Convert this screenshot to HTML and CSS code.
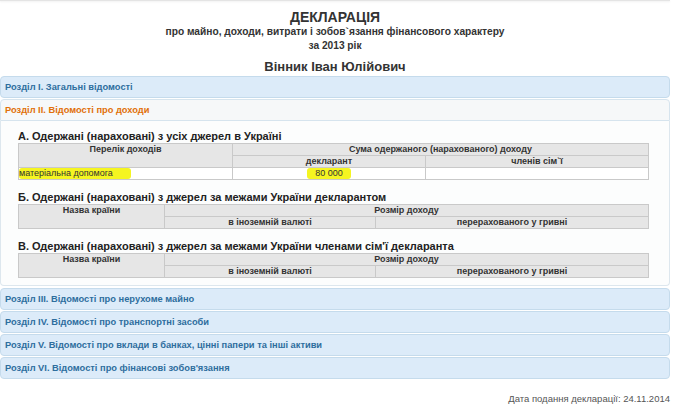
FILE: index.html
```html
<!DOCTYPE html>
<html>
<head>
<meta charset="utf-8">
<link rel="stylesheet" href="styles.css">
</head>
<body>
<div class="page">
  <div class="topbar"></div>
  <div class="heading">
    <div class="title">ДЕКЛАРАЦІЯ</div>
    <div class="sub">про майно, доходи, витрати і зобов`язання фінансового характеру</div>
    <div class="sub">за 2013 рік</div>
    <div class="name">Вінник Іван Юлійович</div>
  </div>
  <div class="accordion">
    <div class="hdr">Розділ І. Загальні відомості</div>
    <div class="hdr active">Розділ ІІ. Відомості про доходи</div>
    <div class="content">
      <div class="sec">А. Одержані (нараховані) з усіх джерел в Україні</div>
      <table class="tbl tbl-a">
        <tr class="th"><td rowspan="2" class="c1">Перелік доходів</td><td colspan="2">Сума одержаного (нарахованого) доходу</td></tr>
        <tr class="th"><td class="c2">декларант</td><td>членів сім`ї</td></tr>
        <tr class="td"><td class="left"><span class="hl hl-a">матеріальна допомога</span></td><td><span class="hl hl-b">80 000</span></td><td></td></tr>
      </table>
      <div class="sec">Б. Одержані (нараховані) з джерел за межами України декларантом</div>
      <table class="tbl tbl-b">
        <tr class="th"><td rowspan="2" class="v-top c1">Назва країни</td><td colspan="2">Розмір доходу</td></tr>
        <tr class="th"><td class="c2">в іноземній валюті</td><td>перерахованого у гривні</td></tr>
      </table>
      <div class="sec">В. Одержані (нараховані) з джерел за межами України членами сім'ї декларанта</div>
      <table class="tbl tbl-b">
        <tr class="th"><td rowspan="2" class="v-top c1">Назва країни</td><td colspan="2">Розмір доходу</td></tr>
        <tr class="th"><td class="c2">в іноземній валюті</td><td>перерахованого у гривні</td></tr>
      </table>
    </div>
    <div class="hdr gap">Розділ ІІІ. Відомості про нерухоме майно</div>
    <div class="hdr">Розділ IV. Відомості про транспортні засоби</div>
    <div class="hdr">Розділ V. Відомості про вклади в банках, цінні папери та інші активи</div>
    <div class="hdr">Розділ VI. Відомості про фінансові зобов'язання</div>
  </div>
  <div class="date">Дата подання декларації: 24.11.2014</div>
</div>
</body>
</html>
```
FILE: styles.css
```css
html, body {
  margin: 0;
  padding: 0;
  background: #ffffff;
}
body {
  font-family: "Liberation Sans", Arial, sans-serif;
  color: #333;
}
.page {
  width: 670px;
}
.topbar {
  height: 1px;
  background: #e4e4e4;
  box-shadow: 0 1px 2px #ececec;
}
.heading {
  text-align: center;
  padding-top: 8px;
}
.title {
  font-size: 14px;
  font-weight: bold;
  line-height: 16px;
  color: #333;
}
.sub {
  font-size: 10.2px;
  font-weight: bold;
  line-height: 14px;
  color: #333;
}
.name {
  font-size: 13px;
  font-weight: bold;
  line-height: 18px;
  margin-top: 5px;
  color: #333;
}
.accordion {
  display: flex;
  flex-direction: column;
}
.hdr {
  height: 20px;
  line-height: 20px;
  border: 1px solid #c5dbec;
  border-radius: 4px;
  background: #dcebf9;
  color: #2e6e9e;
  font-size: 9.3px;
  font-weight: bold;
  padding-left: 4px;
  margin-top: 1px;
}
.hdr:first-child {
  margin-top: 0;
}
.hdr.active {
  background: #f6f8f9;
  color: #e17009;
  border-color: #d6e4ee;
  border-radius: 4px 4px 0 0;
}
.hdr.gap {
  margin-top: 2px;
}
.content {
  border: 1px solid #dde7ee;
  border-top: 0;
  border-radius: 0 0 4px 4px;
  background: #fcfdfd;
  padding: 8px 21px 7px 17px;
}
.sec {
  font-size: 11px;
  font-weight: bold;
  line-height: 14px;
  color: #222;
  margin-top: 10px;
}
.sec:first-child {
  margin-top: 0;
}
.tbl {
  width: 631px;
  border-collapse: collapse;
  font-size: 9px;
}
.tbl td {
  border: 1px solid #c9c9c9;
  padding: 0;
  height: 11px;
  line-height: 11px;
  text-align: center;
}
.tbl .th td {
  background: #e6e6e6;
  color: #333;
  font-weight: bold;
}
.tbl .td td {
  background: #fff;
  color: #333;
}
.tbl-a .c1 { width: 213px; vertical-align: top; }
.tbl-a .c2 { width: 192px; }
.tbl-b .c1 { width: 145px; }
.tbl-b .c2 { width: 210px; }
.tbl .v-top { vertical-align: top; }
.tbl .left { text-align: left; }
.hl {
  background: #f5f521;
  border-radius: 3px;
  display: inline-block;
  line-height: 11px;
}
.hl-a {
  padding-right: 18px;
}
.hl-b {
  padding: 0 8px;
}
.date {
  text-align: right;
  font-size: 9.5px;
  color: #555;
  margin-top: 14px;
}
```
